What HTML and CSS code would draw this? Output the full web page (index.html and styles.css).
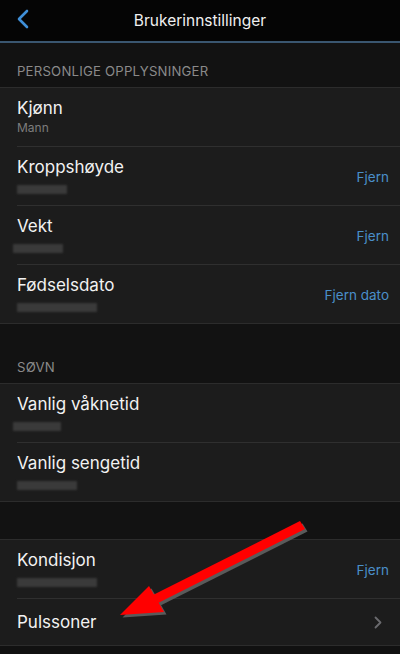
FILE: index.html
```html
<!DOCTYPE html>
<html lang="no">
<head>
    <meta charset="UTF-8">
    <meta name="viewport" content="width=device-width, initial-scale=1.0">
    <title>Brukerinnstillinger</title>
    <link rel="stylesheet" href="styles.css">
</head>
<body>

    <!-- Top bar -->
    <header class="topbar">
        <svg class="back" width="14" height="20" viewBox="0 0 14 20">
            <path d="M11 2 L3 10 L11 18" fill="none" stroke="#3f8fd8" stroke-width="2.6" stroke-linecap="round" stroke-linejoin="round"/>
        </svg>
        <h1>Brukerinnstillinger</h1>
    </header>

    <!-- Personal info -->
    <div class="section-head">PERSONLIGE OPPLYSNINGER</div>
    <ul class="group">
        <li class="row">
            <div class="info">
                <span class="title">Kjønn</span>
                <span class="sub">Mann</span>
            </div>
        </li>
        <li class="row">
            <div class="info">
                <span class="title">Kroppshøyde</span>
                <span class="blur w50"></span>
            </div>
            <a class="action">Fjern</a>
        </li>
        <li class="row">
            <div class="info">
                <span class="title">Vekt</span>
                <span class="blur w50 shift"></span>
            </div>
            <a class="action">Fjern</a>
        </li>
        <li class="row">
            <div class="info">
                <span class="title">Fødselsdato</span>
                <span class="blur w80"></span>
            </div>
            <a class="action">Fjern dato</a>
        </li>
    </ul>

    <!-- Sleep -->
    <div class="section-head tall">SØVN</div>
    <ul class="group">
        <li class="row">
            <div class="info">
                <span class="title">Vanlig våknetid</span>
                <span class="blur w48 shift"></span>
            </div>
        </li>
        <li class="row">
            <div class="info">
                <span class="title">Vanlig sengetid</span>
                <span class="blur w60"></span>
            </div>
        </li>
    </ul>

    <!-- Fitness -->
    <div class="section-head empty"></div>
    <ul class="group">
        <li class="row">
            <div class="info">
                <span class="title">Kondisjon</span>
                <span class="blur w80"></span>
            </div>
            <a class="action">Fjern</a>
        </li>
        <li class="row short">
            <div class="info">
                <span class="title">Pulssoner</span>
            </div>
            <svg class="chev" width="8" height="13" viewBox="0 0 8 13">
                <path d="M1.5 1.5 L6.5 6.5 L1.5 11.5" fill="none" stroke="#6a6a6e" stroke-width="1.8" stroke-linecap="round" stroke-linejoin="round"/>
            </svg>
        </li>
    </ul>

    <!-- Red pointer arrow -->
    <svg class="arrow" width="400" height="654" viewBox="0 0 400 654">
        <g transform="translate(2.5,2.5)" fill="#5a5a5a">
            <path d="M300 521 L305 529 L158 603 L153 595 Z"/>
            <path d="M120 615 L149 586 L164 612 Z"/>
        </g>
        <g fill="#ff0000">
            <path d="M300 521 L305 529 L158 603 L153 595 Z"/>
            <path d="M120 615 L149 586 L164 612 Z"/>
        </g>
    </svg>

</body>
</html>
```

FILE: styles.css
```css
/* Global */
body, html {
    margin: 0;
    padding: 0;
    background: #111111;
    font-family: 'Inter', 'Liberation Sans', sans-serif;
    color: #f2f2f2;
    position: relative;
    overflow: hidden;
}

/* Top bar */
.topbar {
    height: 41px;
    background: #050505;
    border-bottom: 2px solid #3a5670;
    display: flex;
    align-items: center;
    justify-content: center;
    position: relative;
}

.topbar h1 {
    margin: 0;
    font-size: 15.5px;
    font-weight: 400;
    color: #f0f0f0;
}

.back {
    position: absolute;
    left: 16px;
    top: 9px;
}

/* Section headers */
.section-head {
    height: 45px;
    box-sizing: border-box;
    padding: 0 17px 8px;
    display: flex;
    align-items: flex-end;
    font-size: 13.2px;
    line-height: 16px;
    color: #8a8a8a;
    letter-spacing: 0.2px;
    background: #121212;
    border-bottom: 1px solid #2c2c2c;
}

.section-head.tall {
    height: 60px;
}

.section-head.empty {
    height: 38px;
}

/* Rows */
.group {
    list-style: none;
    margin: 0;
    padding: 0 0 0 17px;
    background: #1c1c1c;
    border-bottom: 1px solid #2c2c2c;
}

.row {
    height: 58px;
    display: flex;
    align-items: center;
    justify-content: space-between;
    padding-right: 11px;
    border-bottom: 1px solid #2f2f2f;
}

.row:last-child {
    border-bottom: none;
}

.row.short {
    height: 46px;
    padding-right: 18px;
}

.info {
    align-self: flex-start;
    display: flex;
    flex-direction: column;
    gap: 3px;
    padding-top: 10px;
}

.row.short .info {
    align-self: center;
    padding-top: 0;
}

.title {
    font-size: 17px;
    line-height: 20px;
}

.sub {
    font-size: 12px;
    line-height: 14px;
    color: #7d7d7d;
}

.blur {
    height: 9px;
    margin: 5px 0 0;
    background: #3a3a3a;
    filter: blur(1px);
}

.blur.shift { margin-left: -4px; }
.w48 { width: 48px; }
.w50 { width: 50px; }
.w60 { width: 60px; }
.w80 { width: 80px; }

.action {
    font-size: 13.5px;
    color: #4a8fc9;
    margin-top: 2px;
}

/* Overlay arrow */
.arrow {
    position: absolute;
    top: 0;
    left: 0;
    pointer-events: none;
}
```
